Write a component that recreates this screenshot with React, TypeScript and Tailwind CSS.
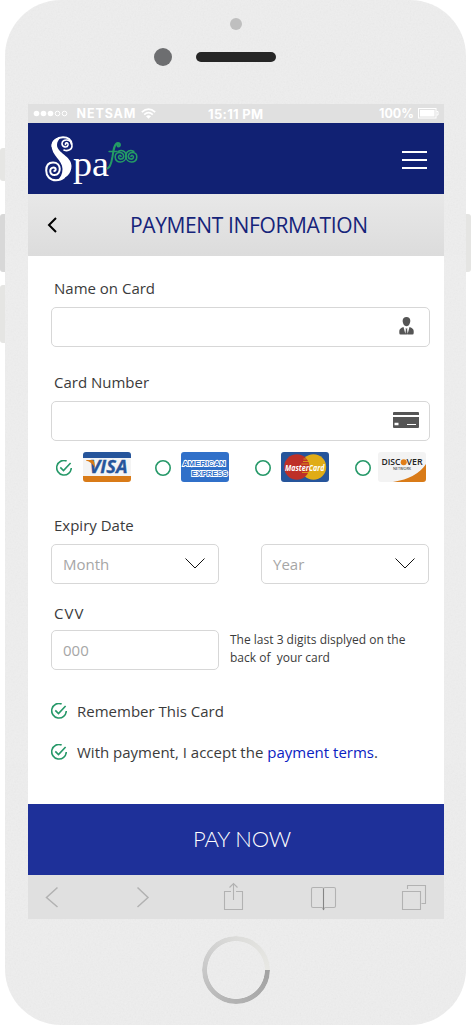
import React from "react";

const label = "pl-[3px] h-5 leading-5 text-[15px] text-[#3b3b3b] whitespace-nowrap";
const box = "h-10 rounded-[5px] border border-[#d7d7d7] bg-white flex items-center";

function Tick() {
  return (
    <svg className="h-4 w-4 shrink-0" viewBox="0 0 16 16" fill="none" stroke="#259868" strokeWidth="1.6">
      <path d="M10.6.9A7.3 7.3 0 1 0 15.3 8" />
      <path d="M4.3 7.4l3.2 3.2L14.6 3" />
    </svg>
  );
}

function Ring() {
  return (
    <svg className="mt-px h-4 w-4 shrink-0" viewBox="0 0 16 16" fill="none" stroke="#259868" strokeWidth="1.6">
      <circle cx="8" cy="8" r="7.2" />
    </svg>
  );
}

function Logo() {
  return (
    <svg className="h-[56px] w-[100px]" viewBox="0 0 100 56">
      <g fill="none" stroke="#fff" strokeLinecap="round" strokeWidth="2">
        <path d="M21.500 13.500c-.5-2.500 3-2 2.500.5-.7 3-6 2.500-6-1.500 0-5 10-5 10 2.500 0 4-5 5.500-8 4" strokeWidth="1.600" />
        <path d="M27.500 13C27 8 23 6.300 19 6.300c-6 0-10.500 4-10.500 9.200" />
        <path d="M7.500 14c0 11 11 15 11 24 0 5-2 8.500-5 11 8-1 14-6 14-14 0-10-14.500-13-14.500-21 0-3 1.500-5.500 4-7.500-5 0-9 2.500-9.500 7.500z" fill="#fff" stroke="none" />
        <path d="M20 46.500c-2.500 2.200-5.500 2.800-8 2.800C6 49.300 2.200 45 2.200 39.500 2.200 34 5 31.500 9 31.500c9 0 8.500 12.500 1.500 12.500-5.500 0-5.500-7.500-1-7.500 3 0 2.500 3.500.8 3.500" />
      </g>
      <text x="29" y="45" fontFamily="Liberation Serif, serif" fontSize="35" fill="#fff" textLength="36" lengthAdjust="spacingAndGlyphs">pa</text>
      <g fill="none" stroke="#249b65" strokeLinecap="round">
        <path d="M63.500 37.500c3-1 4-6 5-12 1-7 2-13.500 5.500-13.500 2.500 0 2.500 3.500.5 3.500-1 0-1.200-1-.7-1.700" strokeWidth="2" />
        <path d="M65 20.500h8" strokeWidth="1.400" />
        <path d="M77 25.500c0-1.800-2.700-1.300-2.500.7.500 3 5.200 2.200 5.200-1 0-5-8.500-5-8.500.8 0 7 10.500 6.500 11-.5 0-6-5-7-8-5" strokeWidth="1.600" />
        <path d="M87 25.500c0-1.800 2.700-1.300 2.500.7-.5 3-5.200 2.200-5.200-1 0-5 8.500-5 8.500.8 0 7-10.500 6.500-11-.5 0-6 5-7 8-5" strokeWidth="1.600" />
      </g>
    </svg>
  );
}

function Visa() {
  return (
    <svg className="h-[30px] w-12 rounded-[3px]" viewBox="0 0 48 30">
      <rect width="48" height="30" fill="#f4f4f4" />
      <rect width="48" height="6" fill="#26559b" />
      <rect y="24" width="48" height="6" fill="#d97b18" />
      <text x="6.500" y="21" fontFamily="Open Sans, sans-serif" fontSize="17.500" fontWeight="700" fontStyle="italic" fill="#26559b" stroke="#26559b" strokeWidth=".3" textLength="38" lengthAdjust="spacingAndGlyphs">VISA</text>
      <path d="M3 8h6q2 0 2.200 2l1 6Q9 10 3 8.500z" fill="#d97b18" />
    </svg>
  );
}

function Amex() {
  return (
    <svg className="h-[30px] w-12 rounded-[3px]" viewBox="0 0 48 30" fontFamily="Liberation Sans, sans-serif" fontSize="8" fontWeight="700">
      <rect width="48" height="30" fill="#3070c9" />
      <g fill="#3070c9" stroke="#fff" strokeWidth="1.800" paintOrder="stroke">
        <text x="1.500" y="13.500" textLength="43" lengthAdjust="spacingAndGlyphs">AMERICAN</text>
        <text x="10.500" y="23.500" textLength="36" lengthAdjust="spacingAndGlyphs">EXPRESS</text>
      </g>
    </svg>
  );
}

function Master() {
  return (
    <svg className="h-[30px] w-12 rounded-[3px]" viewBox="0 0 48 30">
      <rect width="48" height="30" fill="#26559b" />
      <circle cx="32.500" cy="15" r="12.700" fill="#e0ac16" />
      <circle cx="15.800" cy="15" r="12.700" fill="#be3028" />
      <path d="M22 9.500h6M20.500 12h7M20.500 18h7M21 20.500h7M22.500 7h3" stroke="#e0ac16" strokeWidth=".8" />
      <text x="4" y="18.500" fontFamily="Open Sans, sans-serif" fontSize="8.500" fontWeight="700" fontStyle="italic" fill="#fff" textLength="39.500" lengthAdjust="spacingAndGlyphs">MasterCard</text>
    </svg>
  );
}

function Discover() {
  return (
    <svg className="h-[30px] w-12 rounded-[3px]" viewBox="0 0 48 30" fontFamily="Open Sans, sans-serif" fill="#222">
      <rect width="48" height="30" fill="#f3f3f3" />
      <path d="M48 12Q39 26 15 30h33z" fill="#d97b18" />
      <text x="3.500" y="13" fontSize="8" fontWeight="600" textLength="19" lengthAdjust="spacingAndGlyphs">DISC</text>
      <circle cx="25.700" cy="10.200" r="3" fill="#e17e18" />
      <text x="28.500" y="13" fontSize="8" fontWeight="600" textLength="16" lengthAdjust="spacingAndGlyphs">VER</text>
      <text x="15" y="17.500" fontSize="3.800" textLength="18" lengthAdjust="spacingAndGlyphs">NETWORK</text>
    </svg>
  );
}

function Select({ text }: { text: string }) {
  return (
    <div className={`${box} w-[168px] justify-between pl-[11px] pr-[13px]`}>
      <span className="text-[15px] text-[#a6a6a6]">{text}</span>
      <svg className="-mt-0.5 h-[11px] w-5" viewBox="0 0 20 11" fill="none" stroke="#111" strokeWidth="1">
        <path d="M.5.500l9.500 9.500L19.500.500" />
      </svg>
    </div>
  );
}

function StatusBar() {
  return (
    <div className="flex h-[19px] items-center bg-[#e0e0e0] pl-[5px] pr-[5px] font-['Inter'] text-[12px] font-bold leading-none text-white">
      <svg className="h-[7px] w-[35px]" viewBox="0 0 35 7">
        <g fill="#fff">
          <circle cx="3.500" cy="3.500" r="2.800" />
          <circle cx="10.500" cy="3.500" r="2.800" />
          <circle cx="17.500" cy="3.500" r="2.800" />
        </g>
        <g fill="none" stroke="#fff">
          <circle cx="24.500" cy="3.500" r="2.300" />
          <circle cx="31.500" cy="3.500" r="2.300" />
        </g>
      </svg>
      <span className="ml-[8.5px] w-[60px] pt-[2px] text-[12.500px] tracking-[0.9px]">NETSAM</span>
      <svg className="ml-1 h-[11px] w-[15px]" viewBox="0 0 15 11" fill="none" stroke="#fff" strokeWidth="1.600">
        <path d="M.800 4.200q6.700-6.200 13.400 0M3.200 6.700q4.300-4 8.600 0" />
        <path d="M7.500 10.800L5 8.300q2.500-2 5 0z" fill="#fff" stroke="none" />
      </svg>
      <span className="ml-[52.5px] w-[57px] whitespace-nowrap pt-px text-[13px] tracking-[0.3px]">15:11 PM</span>
      <span className="ml-auto pt-px text-[12.500px]">100%</span>
      <svg className="-mt-px ml-1 h-[11px] w-[21px]" viewBox="0 0 21 11">
        <rect x=".5" y=".5" width="17.500" height="9.500" fill="none" stroke="#fff" />
        <rect x="2" y="2" width="14.500" height="6.500" fill="#fff" />
        <path d="M18.500 3.500h1.500v3.500h-1.500" fill="none" stroke="#fff" />
      </svg>
    </div>
  );
}

function Toolbar() {
  return (
    <div className="flex h-11 bg-[#e0e0e0]">
      <svg className="h-11 w-full" viewBox="0 0 416 44" fill="none" stroke="#b2b2b2" strokeWidth="1.100">
        <path d="M29.500 12.500l-11 10 11 9.500M109.500 12.500l10.500 10-10.500 9.500" strokeWidth="1.500" />
        <path d="M203 16.500h-6.500v18h18v-18H208M205.500 25V8.500M201.500 12.500l4-4 4 4" />
        <path d="M295.500 14q0-1.500-1.500-1.500h-9q-1.500 0-1.500 1.500v17q0 1.500 1.500 1.500h9l1.500 2 1.500-2h9q1.500 0 1.500-1.500V14q0-1.500-1.500-1.500h-9q-1.500 0-1.500 1.500" />
        <path d="M295.500 13.500V35" stroke="#858585" />
        <path d="M374.500 16.500h18v18h-18zM379.500 14v-3.500h18v18h-4" />
      </svg>
    </div>
  );
}

export default function App() {
  return (
    <div className="flex h-[1025px] w-[471px] overflow-hidden bg-white font-['Open_Sans',sans-serif]">
      <div className="flex w-[5px] flex-col">
        <div className="mt-[148px] h-[33px] rounded-l-[3px] bg-[#e6e6e4]" />
        <div className="mt-[33px] h-[58px] rounded-l-[3px] bg-[#d8d8d8]" />
        <div className="mt-[13px] h-[58px] rounded-l-[3px] bg-[#e5e5e3]" />
      </div>
      <main className="relative isolate flex w-[461px] flex-col overflow-hidden rounded-[56px] bg-[#eeeeee]">
        <svg className="absolute inset-0 -z-10 h-full w-full opacity-[0.07]">
          <filter id="grain">
            <feTurbulence type="fractalNoise" baseFrequency="0.6" numOctaves="2" />
            <feColorMatrix type="saturate" values="0" />
          </filter>
          <rect width="100%" height="100%" filter="url(#grain)" />
        </svg>
        <div className="h-[104px] pt-[18px]">
          <div className="mx-auto h-3 w-3 rounded-full bg-[#bfbfbf]" />
          <div className="mt-[18px] flex items-center gap-6 pl-[149px]">
            <div className="h-[18px] w-[18px] rounded-full bg-[#6d6e70]" />
            <div className="h-[10px] w-20 rounded-full bg-[#262626]" />
          </div>
        </div>
        <div className="ml-[23px] w-[416px]">
          <StatusBar />
          <header className="flex h-[71px] items-center justify-between bg-[#112173] pl-4 pr-[17px]">
            <Logo />
            <div className="mt-[3px] flex w-[25px] flex-col gap-1.5">
              <i className="h-0.5 bg-white" />
              <i className="h-0.5 bg-white" />
              <i className="h-0.5 bg-white" />
            </div>
          </header>
          <div className="flex h-[62px] items-center bg-gradient-to-b from-[#e8e8e8] to-[#dcdcdc] pl-[19px]">
            <svg className="-mt-px h-4 w-[11px]" viewBox="0 0 11 16" fill="none" stroke="#000" strokeWidth="2">
              <path d="M9 1L2 8l7 7" />
            </svg>
            <h1 className="ml-[72px] whitespace-nowrap pt-px text-[21px] tracking-[-0.37px] text-[#16247a]">PAYMENT INFORMATION</h1>
          </div>
          <form className="flex h-[548px] flex-col bg-white pl-[23px] pr-[14px] pt-[22px]">
            <label className={label}>Name on Card</label>
            <div className={`${box} mt-[9px] justify-end pr-[15px]`}>
              <svg className="-mt-0.5 h-[18px] w-[15px]" viewBox="0 0 15 18" fill="#555">
                <path d="M7.500 0c5 0 4.500 6 2 8.500q-2 1.500-4 0C3 6 2.500 0 7.500 0zM4.500 10l2 7.500H1.500Q.3 17.500.3 16v-2q0-2.500 4.200-4zM10.500 10l-2 7.500h5q1.200 0 1.200-1.500v-2q0-2.500-4.200-4zM6.500 11.500h2l-.4 1.300.7 4.700H6.200l.7-4.700z" />
              </svg>
            </div>
            <label className={`${label} mt-[25px]`}>Card Number</label>
            <div className={`${box} mt-[9px] justify-end pr-[10px]`}>
              <svg className="-mt-0.5 h-4 w-[26px]" viewBox="0 0 26 16">
                <rect width="26" height="16" rx="1" fill="#555" />
                <path d="M0 4h26" stroke="#fff" strokeWidth="2" />
                <path d="M1.500 12h4" stroke="#fff" strokeWidth="2.500" />
                <path d="M14 12.500h9" stroke="#fff" strokeWidth="1" />
              </svg>
            </div>
            <div className="mt-[11px] flex h-[30px] items-center pl-[5px]">
              <div className="pt-px"><Tick /></div>
              <div className="ml-[11px] mr-6"><Visa /></div>
              <Ring />
              <div className="ml-[10px] mr-[26px]"><Amex /></div>
              <Ring />
              <div className="ml-[10px] mr-[26px]"><Master /></div>
              <Ring />
              <div className="ml-[7px]"><Discover /></div>
            </div>
            <label className={`${label} mt-[33px]`}>Expiry Date</label>
            <div className="mt-[9px] flex gap-[42px]">
              <Select text="Month" />
              <Select text="Year" />
            </div>
            <label className={`${label} mt-[19px] tracking-[1px]`}>CVV</label>
            <div className="mt-[7px] flex">
              <div className={`${box} w-[168px] pl-[11px] text-[15px] text-[#a6a6a6]`}>000</div>
              <p className="ml-[11px] mt-px whitespace-pre text-[12px] leading-[18px] text-[#3b3b3b]">{"The last 3 digits displyed on the\nback of  your card"}</p>
            </div>
            <div className="mt-[31px] flex h-5 items-center gap-[10px] text-[15px] text-[#3b3b3b]">
              <Tick />
              <span>Remember This Card</span>
            </div>
            <div className="mt-[21px] flex h-5 items-center gap-[10px] text-[15px] text-[#3b3b3b]">
              <Tick />
              <span className="whitespace-nowrap">With payment, I accept the <a className="text-[#0a22c2]">payment terms</a>.</span>
            </div>
          </form>
          <button className="flex h-[71px] w-full items-center justify-center bg-[#1e3099] pb-[2px] pl-3 font-['Lato'] text-[22px] font-light tracking-[-0.15px] text-white">PAY NOW</button>
          <Toolbar />
        </div>
        <div className="ml-[197px] mt-[17px] h-[68px] w-[68px] rounded-full bg-[conic-gradient(from_90deg,#a2a2a2,#b5b5b5_30%,#cccccc_55%,#dcdcda_75%,#e8e8e4)] [mask:radial-gradient(closest-side,transparent_84%,#000_86%)]" />
      </main>
      <div className="w-[5px]">
        <div className="mt-[214px] h-[58px] rounded-r-[3px] bg-[#e5e5e3]" />
      </div>
    </div>
  );
}
